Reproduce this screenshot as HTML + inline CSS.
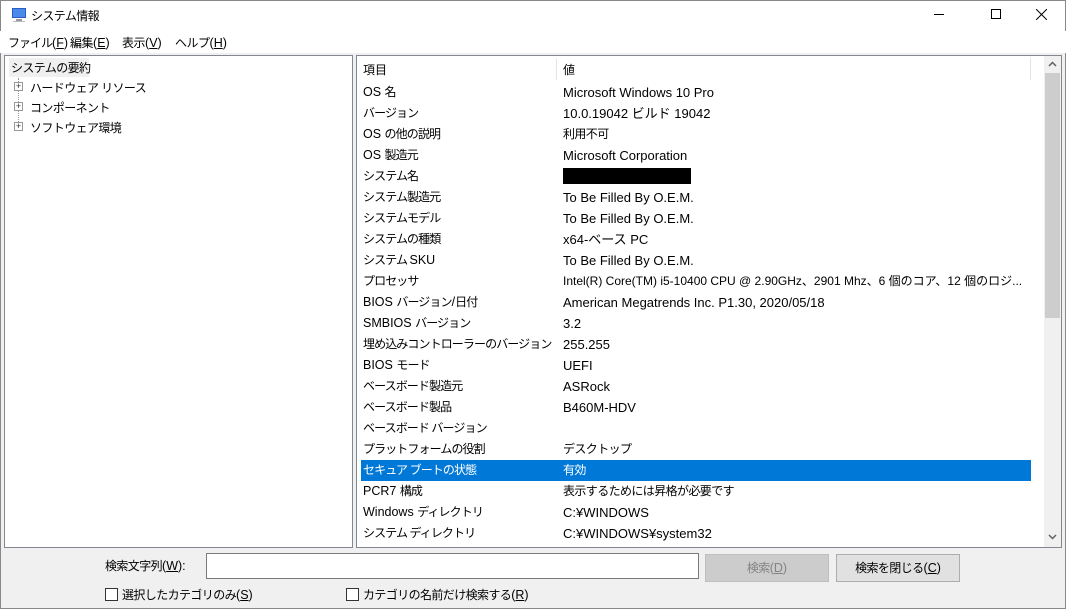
<!DOCTYPE html>
<html><head><meta charset="utf-8"><style>
*{margin:0;padding:0;box-sizing:border-box}
body{width:1066px;height:609px;overflow:hidden;background:#f0f0f0;font-family:"Liberation Sans","Noto Sans CJK JP",sans-serif;font-size:12px;color:#000;position:relative}
.a{position:absolute;white-space:nowrap}
.j{letter-spacing:-0.6px}
i{font-style:normal;letter-spacing:0;font-size:12.5px}
u{text-decoration:underline}
.row{position:absolute;left:361px;width:670px;height:21px;line-height:21px}
.row span{position:absolute;white-space:nowrap}
.row .k{left:2px;letter-spacing:-0.9px}
.row .v{left:202px;font-size:13px}
.row .v.j{font-size:12px;letter-spacing:-0.6px}
.sel{background:#0078d7;color:#fff}
.cb{display:inline-block;width:13px;height:13px;border:1px solid #333;background:#fff;vertical-align:-2px;margin-right:4px}
</style></head><body>
<div class="a" style="left:0;top:0;width:1066px;height:31px;background:#fff"></div>
<div class="a" style="left:0;top:0;width:1px;height:609px;background:#888"></div>
<div class="a" style="left:1065px;top:0;width:1px;height:609px;background:#888"></div>
<div class="a" style="left:0;top:608px;width:1066px;height:1px;background:#888"></div>
<div class="a" style="left:0;top:0;width:1066px;height:1px;background:#888"></div>
<svg class="a" style="left:10px;top:7px" width="18" height="16" viewBox="0 0 18 16"><rect x="2" y="1" width="14" height="10" fill="#2a5bc7"/><rect x="3" y="2" width="12" height="8" fill="#4a8ae8"/><rect x="6" y="12" width="6" height="2" fill="#999"/><rect x="3" y="14" width="12" height="1" fill="#bbb"/></svg>
<div class="a j" style="left:31px;top:7px">システム情報</div>
<div class="a" style="left:934px;top:14px;width:10px;height:1px;background:#000"></div>
<div class="a" style="left:991px;top:9px;width:10px;height:10px;border:1px solid #000"></div>
<svg class="a" style="left:1036px;top:9px" width="11" height="11"><path d="M0 0L11 11M11 0L0 11" stroke="#000" stroke-width="1"/></svg>
<div class="a" style="left:0;top:31px;width:1066px;height:22px;background:#fff"></div>
<div class="a" style="left:8px;top:34px;letter-spacing:-1px">ファイル<i>(<u>F</u>)</i></div>
<div class="a" style="left:70px;top:34px;letter-spacing:-0.5px">編集<i>(<u>E</u>)</i></div>
<div class="a" style="left:122px;top:34px;letter-spacing:-0.5px">表示<i>(<u>V</u>)</i></div>
<div class="a" style="left:175px;top:34px;letter-spacing:-0.5px">ヘルプ<i>(<u>H</u>)</i></div>

<div class="a" style="left:4px;top:55px;width:349px;height:493px;background:#fff;border:1px solid #828790"></div>
<div class="a" style="left:9px;top:58px;width:80px;height:19px;background:#f0f0f0"></div>
<div class="a j" style="left:11px;top:59px">システムの要約</div>
<div class="a" style="left:18px;top:78px;height:50px;border-left:1px dotted #999"></div>
<div class="a" style="left:14px;top:82px;width:9px;height:9px;border:1px solid #999;background:#fff;font-size:9px;line-height:7px;text-align:center;color:#333">+</div>
<div class="a" style="left:14px;top:102px;width:9px;height:9px;border:1px solid #999;background:#fff;font-size:9px;line-height:7px;text-align:center;color:#333">+</div>
<div class="a" style="left:14px;top:122px;width:9px;height:9px;border:1px solid #999;background:#fff;font-size:9px;line-height:7px;text-align:center;color:#333">+</div>
<div class="a j" style="left:30px;top:79px">ハードウェア リソース</div>
<div class="a j" style="left:30px;top:99px">コンポーネント</div>
<div class="a j" style="left:30px;top:119px">ソフトウェア環境</div>

<div class="a" style="left:356px;top:55px;width:706px;height:493px;background:#fff;border:1px solid #828790"></div>
<div class="a" style="left:556px;top:58px;width:1px;height:22px;background:#e5e5e5"></div>
<div class="a" style="left:1030px;top:58px;width:1px;height:22px;background:#e5e5e5"></div>
<div class="a" style="left:363px;top:61px">項目</div>
<div class="a" style="left:563px;top:61px">値</div>
<div class="a" style="left:1044px;top:56px;width:17px;height:491px;background:#f0f0f0"></div>
<div class="a" style="left:1045px;top:73px;width:15px;height:245px;background:#cdcdcd"></div>
<svg class="a" style="left:1048px;top:61px" width="9" height="6"><path d="M1 5L4.5 1.5L8 5" stroke="#606060" stroke-width="1.5" fill="none"/></svg>
<svg class="a" style="left:1048px;top:534px" width="9" height="6"><path d="M1 1L4.5 4.5L8 1" stroke="#606060" stroke-width="1.5" fill="none"/></svg>

<div class="row" style="top:82px"><span class="k"><i>OS </i>名</span><span class="v">Microsoft Windows 10 Pro</span></div>
<div class="row" style="top:103px"><span class="k">バージョン</span><span class="v">10.0.19042 ビルド 19042</span></div>
<div class="row" style="top:124px"><span class="k"><i>OS </i>の他の説明</span><span class="v j">利用不可</span></div>
<div class="row" style="top:145px"><span class="k"><i>OS </i>製造元</span><span class="v">Microsoft Corporation</span></div>
<div class="row" style="top:166px"><span class="k">システム名</span><span class="v" style="top:2px;width:128px;height:16px;background:#000"></span></div>
<div class="row" style="top:187px"><span class="k">システム製造元</span><span class="v">To Be Filled By O.E.M.</span></div>
<div class="row" style="top:208px"><span class="k">システムモデル</span><span class="v">To Be Filled By O.E.M.</span></div>
<div class="row" style="top:229px"><span class="k">システムの種類</span><span class="v">x64-ベース PC</span></div>
<div class="row" style="top:250px"><span class="k">システム <i>SKU</i></span><span class="v">To Be Filled By O.E.M.</span></div>
<div class="row" style="top:271px"><span class="k">プロセッサ</span><span class="v" style="font-size:12px">Intel(R) Core(TM) i5-10400 CPU @ 2.90GHz、2901 Mhz、6 個のコア、12 個のロジ...</span></div>
<div class="row" style="top:292px"><span class="k"><i>BIOS </i>バージョン<i>/</i>日付</span><span class="v">American Megatrends Inc. P1.30, 2020/05/18</span></div>
<div class="row" style="top:313px"><span class="k"><i>SMBIOS </i>バージョン</span><span class="v">3.2</span></div>
<div class="row" style="top:334px"><span class="k">埋め込みコントローラーのバージョン</span><span class="v">255.255</span></div>
<div class="row" style="top:355px"><span class="k"><i>BIOS </i>モード</span><span class="v">UEFI</span></div>
<div class="row" style="top:376px"><span class="k">ベースボード製造元</span><span class="v">ASRock</span></div>
<div class="row" style="top:397px"><span class="k">ベースボード製品</span><span class="v">B460M-HDV</span></div>
<div class="row" style="top:418px"><span class="k">ベースボード バージョン</span><span class="v"></span></div>
<div class="row" style="top:439px"><span class="k">プラットフォームの役割</span><span class="v j">デスクトップ</span></div>
<div class="row sel" style="top:460px"><span class="k">セキュア ブートの状態</span><span class="v j">有効</span></div>
<div class="row" style="top:481px"><span class="k"><i>PCR7 </i>構成</span><span class="v j">表示するためには昇格が必要です</span></div>
<div class="row" style="top:502px"><span class="k"><i>Windows </i>ディレクトリ</span><span class="v">C:¥WINDOWS</span></div>
<div class="row" style="top:523px"><span class="k">システム ディレクトリ</span><span class="v">C:¥WINDOWS¥system32</span></div>

<div class="a j" style="left:105px;top:557px">検索文字列<i>(<u>W</u>):</i></div>
<div class="a" style="left:206px;top:553px;width:493px;height:26px;background:#fff;border:1px solid #7a7a7a"></div>
<div class="a j" style="left:705px;top:554px;width:124px;height:28px;background:#cccccc;border:1px solid #bfbfbf;color:#838383;text-align:center;line-height:26px">検索<i>(<u>D</u>)</i></div>
<div class="a j" style="left:836px;top:554px;width:124px;height:28px;background:#e1e1e1;border:1px solid #adadad;text-align:center;line-height:26px">検索を閉じる<i>(<u>C</u>)</i></div>
<div class="a j" style="left:105px;top:586px"><span class="cb"></span>選択したカテゴリのみ<i>(<u>S</u>)</i></div>
<div class="a j" style="left:346px;top:586px"><span class="cb"></span>カテゴリの名前だけ検索する<i>(<u>R</u>)</i></div>
</body></html>
